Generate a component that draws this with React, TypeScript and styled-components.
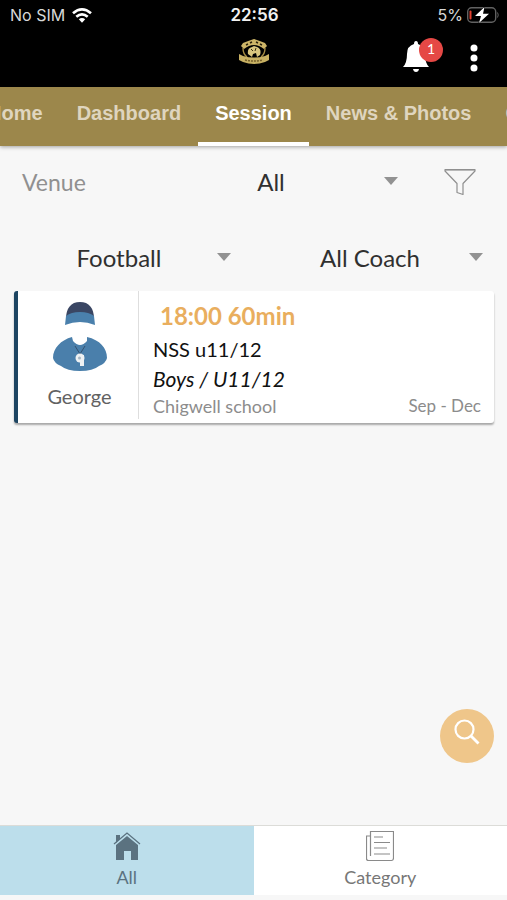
import React from "react";
import styled, { createGlobalStyle } from "styled-components";

const GlobalStyle = createGlobalStyle`
  *, *::before, *::after { box-sizing: border-box; }
  body {
    margin: 0;
    background: #f7f7f7;
    font-family: Lato, "Open Sans", sans-serif;
    color: #333;
  }
  button, select { font: inherit; color: inherit; border: 0; background: none; padding: 0; margin: 0; cursor: pointer; }
`;

const Screen = styled.div`
  min-height: 100vh;
  display: flex;
  flex-direction: column;
  position: relative;
  overflow: hidden;
`;

const TopBar = styled.header`
  background: #000;
  color: #fff;
`;

const StatusBar = styled.div`
  display: grid;
  grid-template-columns: 1fr auto 1fr;
  align-items: center;
  height: 30px;
  padding: 0 8px 0 10px;
  font: 400 16px/20px Inter, sans-serif;
  color: #d8d8d8;
`;

const StatusGroup = styled.div<{ $end?: boolean }>`
  display: flex;
  align-items: center;
  gap: ${(p) => (p.$end ? 4 : 7)}px;
  justify-content: ${(p) => (p.$end ? "flex-end" : "flex-start")};
`;

const Clock = styled.time`
  font-weight: 600;
  font-size: 17px;
  color: #f2f2f2;
`;

const TitleBar = styled.div`
  display: grid;
  grid-template-columns: 1fr auto 1fr;
  align-items: start;
  height: 57px;
  padding: 7px 24px 0;
`;

const Logo = styled.svg`
  grid-column: 2;
  display: block;
`;

const Actions = styled.div`
  display: flex;
  justify-content: flex-end;
  gap: 36px;
`;

const IconButton = styled.button`
  position: relative;
  display: block;
  svg { display: block; }
`;

const BellButton = styled(IconButton)`
  padding-top: 4px;
`;

const DotsButton = styled(IconButton)`
  padding: 7px 5px 0;
`;

const Badge = styled.span`
  position: absolute;
  top: 1px;
  left: 16px;
  width: 24px;
  height: 24px;
  border-radius: 50%;
  background: #e54845;
  color: #fff;
  font-size: 14px;
  line-height: 22px;
  text-align: center;
`;

const Tabs = styled.nav`
  display: grid;
  grid-template-columns: minmax(0, 1fr) auto minmax(0, 1fr);
  height: 59px;
  background: #9c874b;
  box-shadow: 0 1px 4px rgba(0, 0, 0, 0.35);
  z-index: 1;
`;

const TabGroup = styled.div<{ $end?: boolean }>`
  display: flex;
  overflow: hidden;
  justify-content: ${(p) => (p.$end ? "flex-end" : "flex-start")};
`;

const Tab = styled.a<{ $active?: boolean }>`
  flex: none;
  padding: 14px 17px 0;
  border-bottom: 4px solid ${(p) => (p.$active ? "#fff" : "transparent")};
  font: 700 20px/24px "Liberation Sans", Arial, sans-serif;
  color: ${(p) => (p.$active ? "#fff" : "#dfd5bf")};
  text-decoration: none;
  white-space: nowrap;
`;

const Main = styled.main`
  flex: 1;
  padding: 12px 13px 24px 14px;
`;

const VenueRow = styled.div`
  display: grid;
  grid-template-columns: 122px 1fr auto;
  align-items: center;
  height: 48px;
  padding: 0 18px 0 8px;
`;

const VenueLabel = styled.label`
  font-size: 23px;
  line-height: 28px;
  color: #909090;
`;

const FilterRow = styled.div`
  display: grid;
  grid-template-columns: 1fr 1fr;
  height: 48px;
  margin: 28px -13px 9px -7px;
`;

const SelectBox = styled.div<{ $inset: number }>`
  position: relative;
  display: flex;
  align-items: center;
  height: 48px;
  margin-right: ${(p) => p.$inset}px;
`;

const Select = styled.select`
  appearance: none;
  width: 100%;
  height: 32px;
  font-size: 24px;
  line-height: 32px;
  color: #303030;
  text-align: center;
  text-align-last: center;
`;

const Caret = styled.svg`
  position: absolute;
  right: 0;
  top: 19px;
  pointer-events: none;
`;

const Card = styled.article`
  display: grid;
  grid-template-columns: 121px 1fr;
  min-height: 132px;
  background: #fff;
  border-left: 4px solid #1d4562;
  border-radius: 3px;
  box-shadow: 0 2px 2px rgba(0, 0, 0, 0.32);
`;

const Coach = styled.div`
  display: flex;
  flex-direction: column;
  align-items: center;
  gap: 12px;
  padding: 11px 0 0 3px;
  margin-bottom: 4px;
  border-right: 1px solid #dedede;
  font-size: 20px;
  line-height: 24px;
  color: #626262;
`;

const Details = styled.div`
  padding: 10px 13px 0 14px;
`;

const SessionTime = styled.h2`
  margin: 0 0 3px 7px;
  font-size: 24px;
  font-weight: 700;
  line-height: 30px;
  color: #e9ae5e;
`;

const Line = styled.p<{ $italic?: boolean }>`
  margin: 0;
  font-size: ${(p) => (p.$italic ? 21 : 20)}px;
  line-height: 30px;
  font-style: ${(p) => (p.$italic ? "italic" : "normal")};
  color: #111;
`;

const Foot = styled.div`
  display: flex;
  justify-content: space-between;
  font-size: 18px;
  line-height: 24px;
  color: #8c8c8c;
`;

const Term = styled.span`
  font-size: 17px;
`;

const SearchButton = styled.button`
  position: absolute;
  right: 13px;
  bottom: 137px;
  width: 54px;
  height: 54px;
  border-radius: 50%;
  background: #efc68a;
  svg { display: block; margin: -8px auto 0; }
`;

const BottomNav = styled.nav`
  display: grid;
  grid-template-columns: 1fr 1fr;
  margin-bottom: 5px;
  background: #fff;
  border-top: 1px solid #dcdcd8;
`;

const NavItem = styled.button<{ $active?: boolean }>`
  display: flex;
  flex-direction: column;
  align-items: center;
  gap: 2px;
  height: 69px;
  padding-top: 4px;
  background: ${(p) => (p.$active ? "#bcdeeb" : "#fff")};
  color: ${(p) => (p.$active ? "#5b7280" : "#777")};
  font-size: 18px;
  line-height: 26px;
`;

function SelectField({ id, label, options, inset }: { id: string; label?: string; options: string[]; inset: number }) {
  return (
    <SelectBox $inset={inset}>
      <Select id={id} aria-label={label}>
        {options.map((o) => <option key={o}>{o}</option>)}
      </Select>
      <Caret width="14" height="8" viewBox="0 0 14 8"><path d="M0 0h14L7 8z" fill="#929292" /></Caret>
    </SelectBox>
  );
}

function ClubLogo() {
  return (
    <Logo width="32" height="30" viewBox="0 0 32 30" role="img" aria-label="Club crest">
      <path d="M3 9L5 6Q10 4 16 2Q22 4 27 6L29 9L26 12Q16 4 6 12z" fill="#cdb568" />
      <path d="M8 8l2-1M12 6l2-1M18 5l2 1M22 7l2 1" stroke="#2b220c" strokeWidth="1.4" />
      <path d="M5 11Q5 17 9 20M27 11Q27 17 23 20" fill="none" stroke="#a58b43" strokeWidth="1.4" />
      <path d="M10 17Q9 11 14 10L16 9L19 10Q24 12 22 18L19 20L18 16L15 17L14 20z" fill="#d9c67f" />
      <path d="M13 12l2 2M18 11l-1 3" stroke="#3a2f12" strokeWidth="1" />
      <path d="M1 17L5 19Q16 22 27 19L31 17V23L27 25Q16 29 5 25L1 23z" fill="#c8b163" />
      <path d="M7 23Q16 25 25 23" fill="none" stroke="#75602b" strokeWidth="1.5" strokeDasharray="2 1" />
    </Logo>
  );
}

function CoachPicture() {
  return (
    <svg width="54" height="70" viewBox="0 0 54 70" role="img" aria-label="Coach">
      <path d="M13 17C13 6 18 0 27 0s14 6 14 17z" fill="#3a4663" />
      <path d="M12 23L13 14Q18 10 27 10t14 4l1 9Q27 17 12 23z" fill="#4a80ac" />
      <path d="M19 35L20 39Q27 47 34 39V35C47 38 54 46 54 56Q53 61 46 64Q40 69 27 69T8 64Q1 61 0 56C0 46 8 38 19 35z" fill="#4a7fab" />
      <path d="M22 44L27 52L32 44" fill="none" stroke="#34516f" strokeWidth="1" />
      <circle cx="27" cy="56" r="4.500" fill="#eef1f3" />
      <path d="M26 53h5v11h-4v-5z" fill="#eef1f3" />
      <circle cx="26.500" cy="56" r="1.500" fill="#a9b7c3" />
    </svg>
  );
}

export default function App() {
  return (
    <Screen>
      <GlobalStyle />
      <TopBar>
        <StatusBar>
          <StatusGroup>
            <span>No SIM</span>
            <svg width="20" height="15" viewBox="0 0 20 15" fill="none" stroke="#fff" strokeWidth="2.700">
              <path d="M1 5.300Q10-2.400 19 5.300M4.300 8.800Q10 4 15.700 8.800" />
              <path d="M6.800 11.300Q10 8.800 13.200 11.300L10 14.800z" fill="#fff" stroke="none" />
            </svg>
          </StatusGroup>
          <Clock>22:56</Clock>
          <StatusGroup $end>
            <span>5%</span>
            <svg width="32" height="16" viewBox="0 0 32 16">
              <rect x="0.700" y="0.700" width="28" height="14.600" rx="4" fill="none" stroke="#626262" strokeWidth="1.400" />
              <path d="M30.500 5.500q1.500 2.500 0 5" stroke="#626262" fill="none" />
              <rect x="2.500" y="3.500" width="2" height="9" rx="1" fill="#e2402f" />
              <path d="M17.500 0L8 9h6l-2 7L22 6.700h-6z" fill="#fff" stroke="#000" strokeWidth="1" paintOrder="stroke" />
            </svg>
          </StatusGroup>
        </StatusBar>
        <TitleBar>
          <ClubLogo />
          <Actions>
            <BellButton aria-label="Notifications, 1 unread">
              <svg width="26" height="31" viewBox="0 0 26 31" fill="#fff">
                <path d="M13 0q2 0 2 3q7 2 7 10q0 9 4 13H0q4-4 4-13q0-8 7-10q0-3 2-3z" />
                <path d="M10 28h6q-.5 3-3 3t-3-3z" />
              </svg>
              <Badge>1</Badge>
            </BellButton>
            <DotsButton aria-label="More options">
              <svg width="8" height="28" viewBox="0 0 8 28" fill="#fff">
                <circle cx="4" cy="4" r="3.500" /><circle cx="4" cy="14" r="3.500" /><circle cx="4" cy="24" r="3.500" />
              </svg>
            </DotsButton>
          </Actions>
        </TitleBar>
      </TopBar>
      <Tabs>
        <TabGroup $end>
          <Tab href="#home">Home</Tab>
          <Tab href="#dashboard">Dashboard</Tab>
        </TabGroup>
        <Tab href="#session" $active aria-current="page">Session</Tab>
        <TabGroup>
          <Tab href="#news">News &amp; Photos</Tab>
          <Tab href="#contact">Contact</Tab>
        </TabGroup>
      </Tabs>
      <Main>
        <VenueRow>
          <VenueLabel htmlFor="venue">Venue</VenueLabel>
          <SelectField id="venue" options={["All"]} inset={46} />
          <IconButton aria-label="Filter">
            <svg width="32" height="28" viewBox="0 0 32 28" fill="none" stroke="#8f8f8f" strokeWidth="1.200" strokeLinejoin="round">
              <path d="M1 1.500H31V3L19 15.500V26.500L13 24.500V15.500L1 3z" />
              <path d="M1 2.500H31" strokeWidth=".6" />
            </svg>
          </IconButton>
        </VenueRow>
        <FilterRow>
          <SelectField id="sport" label="Sport" options={["Football"]} inset={26} />
          <SelectField id="coach" label="Coach" options={["All Coach"]} inset={24} />
        </FilterRow>
        <Card>
          <Coach>
            <CoachPicture />
            <span>George</span>
          </Coach>
          <Details>
            <SessionTime>18:00 60min</SessionTime>
            <Line>NSS u11/12</Line>
            <Line $italic>Boys / U11/12</Line>
            <Foot>
              <span>Chigwell school</span>
              <Term>Sep - Dec</Term>
            </Foot>
          </Details>
        </Card>
      </Main>
      <SearchButton aria-label="Search">
        <svg width="26" height="26" viewBox="0 0 26 26" fill="none" stroke="#fff" strokeWidth="2.200">
          <circle cx="10.500" cy="10.500" r="9" /><path d="M17 17l7.500 7.500" strokeWidth="2.800" />
        </svg>
      </SearchButton>
      <BottomNav>
        <NavItem $active aria-current="page">
          <svg width="28" height="32" viewBox="0 0 28 32" fill="#5b7280">
            <path d="M3 13V5h4v4zM3 15L14 6L25 15V30H18V21H11V30H3z" />
            <path d="M1 14L14 3L27 14" fill="none" stroke="#5b7280" strokeWidth="1.300" />
          </svg>
          <span>All</span>
        </NavItem>
        <NavItem>
          <svg width="28" height="32" viewBox="0 0 28 32" fill="none" stroke="#8a8a8a" strokeWidth="1.200">
            <path d="M4.500 26V1.500H27.500V28q0 2.500-2 2.500H2.500Q.5 30.500.5 28.500V6H4" />
            <path d="M8 7h9M8 12.500h16M8 18h13M8 24h16" />
          </svg>
          <span>Category</span>
        </NavItem>
      </BottomNav>
    </Screen>
  );
}
